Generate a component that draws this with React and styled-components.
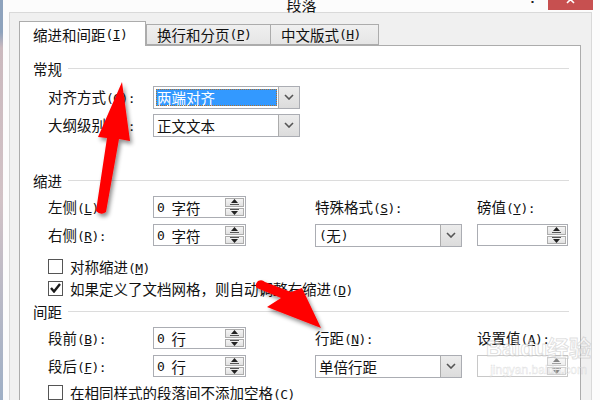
import React from "react";
import styled, { createGlobalStyle } from "styled-components";

const GlobalStyle = createGlobalStyle`
  html, body {
    margin: 0;
    padding: 0;
    background: #fcfcfc;
  }
  body {
    font-family: "Noto Sans CJK SC", "Noto Sans", sans-serif;
    color: #111;
  }
`;

const Screen = styled.div`
  position: relative;
  display: flex;
  width: 600px;
  height: 400px;
  overflow: hidden;
`;

const DesktopStrip = styled.div`
  width: 3px;
  flex-shrink: 0;
  background: linear-gradient(#8ea3bd 0%, #8ea3bd 8%, #cbb9be 12%, #d2c2c6 50%, #9fb0c6 100%);
`;

const Window = styled.div`
  flex: 1;
  display: flex;
  flex-direction: column;
  background: #fcfcfc;
`;

const TitleBar = styled.div`
  position: relative;
  height: 20px;
  display: flex;
  justify-content: center;
  align-items: flex-start;
`;

const Title = styled.div`
  margin-top: -3px;
  font-size: 15px;
  line-height: 15px;
`;

const TitleButtons = styled.div`
  position: absolute;
  right: 7px;
  top: 0;
  display: flex;
  align-items: flex-start;
`;

const HelpMark = styled.span`
  margin-top: -9px;
  margin-right: 11px;
  font-family: "Liberation Sans", sans-serif;
  font-weight: bold;
  font-size: 14px;
  line-height: 14px;
  color: #222;
`;

const CloseButton = styled.div`
  width: 45px;
  height: 10px;
  background: #c75050;
  display: flex;
  justify-content: center;
  overflow: hidden;
`;

const Frame = styled.div`
  flex: 1;
  display: flex;
  padding: 0 8px 0 6px;
`;

const Panel = styled.div`
  flex: 1;
  display: flex;
  flex-direction: column;
  background: #f0f0f0;
  border: 1px solid #d9d9d9;
  border-bottom: none;
  padding: 8px 10px 0 9px;
`;

const TabList = styled.div`
  display: flex;
  align-items: flex-end;
  height: 24px;
  position: relative;
  z-index: 1;
`;

const Tab = styled.div`
  box-sizing: border-box;
  width: ${(p) => p.$w}px;
  height: ${(p) => (p.$active ? 25 : 21)}px;
  margin-bottom: ${(p) => (p.$active ? -1 : 0)}px;
  padding-left: ${(p) => (p.$active ? 13 : 10)}px;
  display: flex;
  align-items: center;
  font-size: 14.5px;
  border: 1px solid #acacac;
  border-bottom: ${(p) => (p.$active ? "none" : "1px solid #acacac")};
  margin-right: ${(p) => (p.$active ? 0 : -1)}px;
  background: ${(p) =>
    p.$active ? "#ffffff" : "linear-gradient(#f0f0f0, #e5e5e5)"};
  white-space: nowrap;
`;

const Pane = styled.div`
  flex: 1;
  background: #ffffff;
  border: 1px solid #acacac;
  border-bottom: none;
  padding: 10px 11px 0 13px;
`;

const SectionHeader = styled.div`
  display: flex;
  align-items: center;
  height: 24px;
  margin-top: ${(p) => p.$top || 0}px;
  font-size: 14.5px;
  white-space: nowrap;

  &::after {
    content: "";
    flex: 1;
    height: 1px;
    margin-left: 6px;
    background: #dcdcdc;
  }
`;

const FieldGrid = styled.div`
  display: grid;
  grid-template-columns: 105px 162px 162px 91px;
  grid-auto-rows: 28px;
  align-items: center;
  padding-left: 15px;
  margin-top: ${(p) => p.$top || 0}px;
`;

const Label = styled.span`
  font-size: 14.5px;
  white-space: nowrap;
  line-height: 1;
`;

const Mono = styled.span`
  font-family: "DejaVu Sans Mono", monospace;
  font-size: 13px;
  letter-spacing: -0.6px;
  white-space: pre;
  u {
    text-underline-offset: 1px;
  }
`;

const Combo = styled.div`
  box-sizing: border-box;
  width: 147px;
  height: 23px;
  display: flex;
  border: 1px solid #abadb3;
  background: #fff;
`;

const ComboValue = styled.div`
  flex: 1;
  display: flex;
  align-items: center;
  padding-left: 3px;
  font-size: 14.5px;
  white-space: nowrap;
`;

const ComboSelected = styled.div`
  flex: 1;
  margin: 2px 1px 2px 2px;
  display: flex;
  align-items: center;
  padding-left: 1px;
  background: #3399ff;
  color: #fff;
  font-size: 14.5px;
  outline: 1px dotted #b0702c;
  outline-offset: -1px;
`;

const DropButton = styled.div`
  width: 20px;
  display: flex;
  align-items: center;
  justify-content: center;
  border-left: 1px solid #acacac;
  background: linear-gradient(#ececec, #dcdcdc);
`;

const Spin = styled.div`
  box-sizing: border-box;
  width: ${(p) => p.$w || 93}px;
  height: 22px;
  display: flex;
  border: 1px solid ${(p) => (p.$disabled ? "#c8c8c8" : "#abadb3")};
  background: #fff;
`;

const SpinValue = styled.div`
  flex: 1;
  display: flex;
  align-items: center;
  padding-left: 3px;
  font-size: 14.5px;
  white-space: nowrap;
`;

const SpinButtons = styled.div`
  width: 19px;
  margin: 1px;
  display: flex;
  flex-direction: column;
  gap: 1px;
  opacity: ${(p) => (p.$disabled ? 0.55 : 1)};
`;

const SpinButton = styled.div`
  flex: 1;
  display: flex;
  align-items: center;
  justify-content: center;
  border: 1px solid #adadad;
  background: linear-gradient(#f4f4f4, #e2e2e2);
`;

const CheckRow = styled.div`
  display: flex;
  align-items: center;
  gap: 7px;
  height: 22px;
  padding-left: 15px;
  margin-top: ${(p) => p.$top || 0}px;
  font-size: 14.5px;
  white-space: nowrap;
`;

const CheckBox = styled.div`
  box-sizing: border-box;
  width: 15px;
  height: 15px;
  border: 1px solid #555;
  background: #fff;
  display: flex;
  align-items: center;
  justify-content: center;
`;

const Overlay = styled.svg`
  position: absolute;
  left: 0;
  top: 0;
  pointer-events: none;
`;

const Watermark = styled.div`
  position: absolute;
  left: 486px;
  top: 334px;
  display: flex;
  flex-direction: column;
  align-items: center;
  white-space: nowrap;
  pointer-events: none;
  color: rgba(255, 255, 255, 0.5);
  -webkit-text-stroke: 1px rgba(175, 175, 175, 0.4);
`;

const WatermarkLogo = styled.div`
  font-family: "Liberation Sans", "Noto Sans CJK SC", sans-serif;
  font-weight: bold;
  font-size: 22px;
  line-height: 30px;
`;

const WatermarkUrl = styled.div`
  font-family: "Liberation Sans", sans-serif;
  font-size: 12px;
  line-height: 12px;
  -webkit-text-stroke: 0.5px rgba(175, 175, 175, 0.4);
`;

const Key = ({ k, colon }) => (
  <Mono>
    (<u>{k}</u>){colon ? ":" : ""}
  </Mono>
);

const Chevron = () => (
  <svg width="10" height="6" viewBox="0 0 10 6">
    <path d="M1 1 L5 5 L9 1" fill="none" stroke="#555" strokeWidth="1.6" />
  </svg>
);

const UpArrow = () => (
  <svg width="9" height="6" viewBox="0 0 9 6">
    <path d="M4.5 0 L8 4 L1 4 Z" fill="#222" />
    <rect x="0" y="5" width="9" height="1" fill="#555" />
  </svg>
);

const DownArrow = () => (
  <svg width="9" height="6" viewBox="0 0 9 6">
    <rect x="0" y="0" width="9" height="1" fill="#555" />
    <path d="M1 2 L8 2 L4.5 6 Z" fill="#222" />
  </svg>
);

const SpinBox = ({ children, w, disabled }) => (
  <Spin $w={w} $disabled={disabled}>
    <SpinValue>{children}</SpinValue>
    <SpinButtons $disabled={disabled}>
      <SpinButton>
        <UpArrow />
      </SpinButton>
      <SpinButton>
        <DownArrow />
      </SpinButton>
    </SpinButtons>
  </Spin>
);

const ComboBox = ({ children, selected }) => (
  <Combo>
    {selected ? (
      <ComboSelected>{children}</ComboSelected>
    ) : (
      <ComboValue>{children}</ComboValue>
    )}
    <DropButton>
      <Chevron />
    </DropButton>
  </Combo>
);

const Check = ({ checked, children, top }) => (
  <CheckRow $top={top}>
    <CheckBox>
      {checked && (
        <svg width="11" height="10" viewBox="0 0 11 10">
          <path
            d="M1 5 L4 8.5 L10 1"
            fill="none"
            stroke="#1a1a1a"
            strokeWidth="2.4"
          />
        </svg>
      )}
    </CheckBox>
    <span>{children}</span>
  </CheckRow>
);

export default function App() {
  return (
    <Screen>
      <GlobalStyle />
      <DesktopStrip />
      <Window>
        <TitleBar>
          <Title>段落</Title>
          <TitleButtons>
            <HelpMark>?</HelpMark>
            <CloseButton>
              <svg width="10" height="10" viewBox="0 0 10 10">
                <path
                  d="M1 -4 L8 3 M8 -4 L1 3"
                  stroke="#fff"
                  strokeWidth="1.6"
                />
              </svg>
            </CloseButton>
          </TitleButtons>
        </TitleBar>

        <Frame>
          <Panel>
            <TabList>
              <Tab $active $w={127}>
                缩进和间距<Key k="I" />
              </Tab>
              <Tab $w={125}>
                换行和分页<Key k="P" />
              </Tab>
              <Tab $w={109}>
                中文版式<Key k="H" />
              </Tab>
            </TabList>

            <Pane>
              <SectionHeader>常规</SectionHeader>
              <FieldGrid $top={3}>
                <Label>
                  对齐方式<Key k="G" colon />
                </Label>
                <ComboBox selected>两端对齐</ComboBox>
                <span />
                <span />
                <Label>
                  大纲级别<Key k="O" colon />
                </Label>
                <ComboBox>正文文本</ComboBox>
              </FieldGrid>

              <SectionHeader $top={29}>缩进</SectionHeader>
              <FieldGrid $top={1}>
                <Label>
                  左侧<Key k="L" colon />
                </Label>
                <SpinBox>
                  <Mono>0 </Mono>字符
                </SpinBox>
                <Label>
                  特殊格式<Key k="S" colon />
                </Label>
                <Label>
                  磅值<Key k="Y" colon />
                </Label>
                <Label>
                  右侧<Key k="R" colon />
                </Label>
                <SpinBox>
                  <Mono>0 </Mono>字符
                </SpinBox>
                <ComboBox>
                  <Mono>(</Mono>无<Mono>)</Mono>
                </ComboBox>
                <SpinBox w={91} />
              </FieldGrid>

              <Check top={6}>
                对称缩进<Key k="M" />
              </Check>
              <Check checked>
                如果定义了文档网格，则自动调整右缩进<Key k="D" />
              </Check>

              <SectionHeader>间距</SectionHeader>
              <FieldGrid $top={1}>
                <Label>
                  段前<Key k="B" colon />
                </Label>
                <SpinBox>
                  <Mono>0 </Mono>行
                </SpinBox>
                <Label>
                  行距<Key k="N" colon />
                </Label>
                <Label>
                  设置值<Key k="A" colon />
                </Label>
                <Label>
                  段后<Key k="F" colon />
                </Label>
                <SpinBox>
                  <Mono>0 </Mono>行
                </SpinBox>
                <ComboBox>单倍行距</ComboBox>
                <SpinBox w={91} disabled />
              </FieldGrid>

              <Check top={1}>
                在相同样式的段落间不添加空格<Key k="C" />
              </Check>
            </Pane>
          </Panel>
        </Frame>
      </Window>

      <Watermark>
        <WatermarkLogo>Baidu经验</WatermarkLogo>
        <WatermarkUrl>jingyan.baidu.com</WatermarkUrl>
      </Watermark>

      <Overlay width="600" height="400" viewBox="0 0 600 400">
        <defs>
          <filter id="arrowShadow" x="-30%" y="-30%" width="160%" height="160%">
            <feDropShadow dx="2" dy="3" stdDeviation="2" floodColor="#000" floodOpacity="0.45" />
          </filter>
        </defs>
        <g fill="#ff0000" filter="url(#arrowShadow)">
          <path d="M122 82 L130 141 L119 139 L106 212 Q101 216 96 211 L107 138 L98 137 Z" />
          <path d="M258 281 Q262 279 265 282 L291 292 L302 288 L321 328 L267 307 L281 298 L257 288 Q254 285 258 281 Z" />
        </g>
      </Overlay>
    </Screen>
  );
}
